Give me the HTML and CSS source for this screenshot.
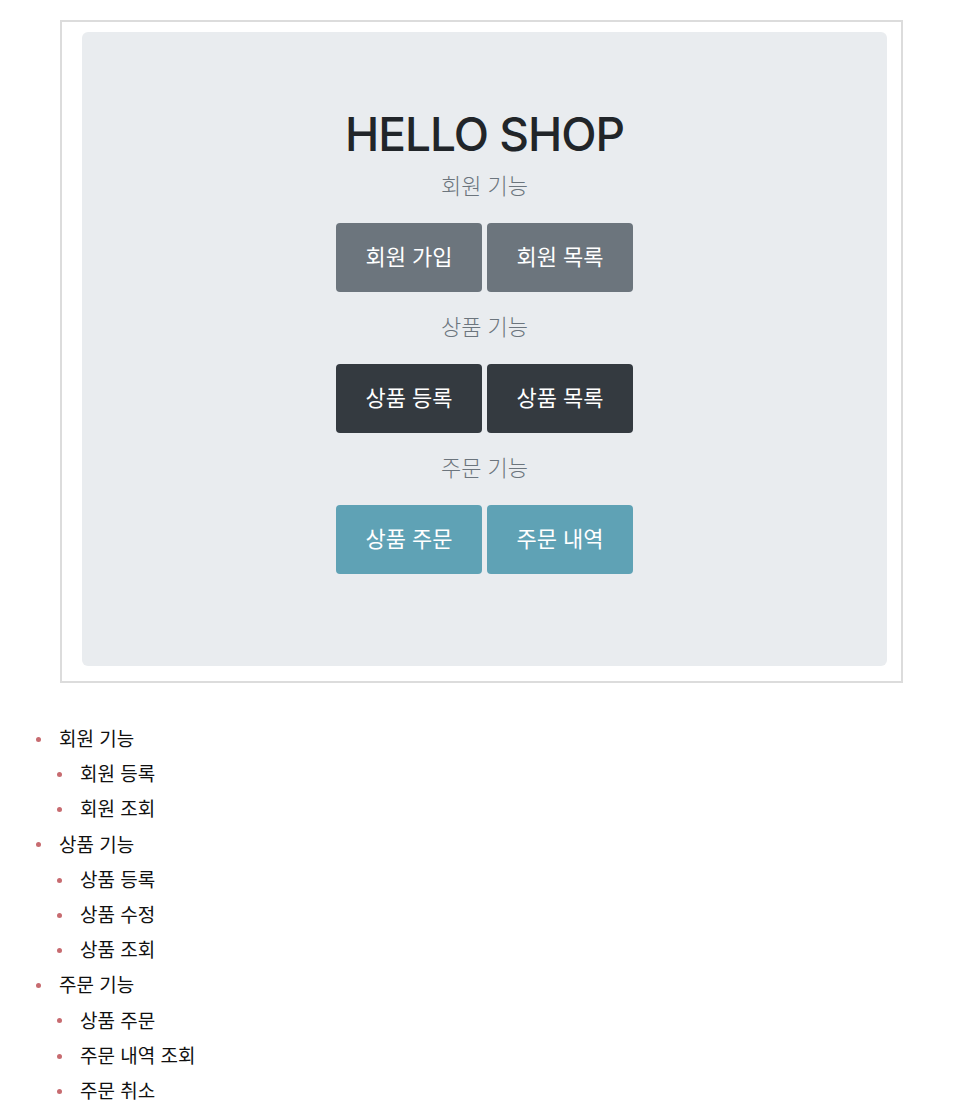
FILE: index.html
```html
<!DOCTYPE html>
<html lang="ko">

<head>
  <meta charset="UTF-8" />
  <meta name="viewport" content="width=device-width, initial-scale=1.0" />
  <title>HELLO SHOP</title>
  <link rel="stylesheet" href="styles.css">
</head>

<body>
  <div class="preview">
    <div class="jumbotron">
      <h1>HELLO SHOP</h1>

      <p class="lead">회원 기능</p>
      <div class="btn-row">
        <a class="btn btn-secondary" href="#">회원 가입</a>
        <a class="btn btn-secondary" href="#">회원 목록</a>
      </div>

      <p class="lead">상품 기능</p>
      <div class="btn-row">
        <a class="btn btn-dark" href="#">상품 등록</a>
        <a class="btn btn-dark" href="#">상품 목록</a>
      </div>

      <p class="lead">주문 기능</p>
      <div class="btn-row">
        <a class="btn btn-info" href="#">상품 주문</a>
        <a class="btn btn-info" href="#">주문 내역</a>
      </div>
    </div>
  </div>

  <ul class="feature-list">
    <li>회원 기능
      <ul>
        <li>회원 등록</li>
        <li>회원 조회</li>
      </ul>
    </li>
    <li>상품 기능
      <ul>
        <li>상품 등록</li>
        <li>상품 수정</li>
        <li>상품 조회</li>
      </ul>
    </li>
    <li>주문 기능
      <ul>
        <li>상품 주문</li>
        <li>주문 내역 조회</li>
        <li>주문 취소</li>
      </ul>
    </li>
  </ul>
</body>

</html>
```

FILE: styles.css
```css
body {
  margin: 0;
  background-color: #fff;
  font-family: Inter, "Noto Sans CJK KR", sans-serif;
}

/* 화면 캡처 박스 */
.preview {
  width: 843px;
  margin: 20px 0 0 60px;
  padding: 10px 14px 15px 20px;
  border: 2px solid #dcdcdc;
  box-sizing: border-box;
}

.jumbotron {
  background-color: #e9ecef;
  border-radius: 6px;
  padding: 73px 20px 92px;
  text-align: center;
}

.jumbotron h1 {
  margin: 0 0 8px;
  font-size: 46px;
  font-weight: 500;
  letter-spacing: -1px;
  line-height: 58px;
  color: #212529;
}

.lead {
  margin: 0 0 22px;
  font-size: 22px;
  font-weight: 300;
  line-height: 30px;
  color: #6c757d;
}

.btn-row + .lead {
  margin-top: 20px;
}

.btn-row {
  display: flex;
  justify-content: center;
  gap: 5px;
}

.btn {
  display: block;
  width: 146px;
  padding: 18px 0 19px;
  border: 1px solid transparent;
  border-radius: 4px;
  box-sizing: border-box;
  font-size: 22px;
  font-weight: 400;
  line-height: 30px;
  color: #fff;
  text-decoration: none;
}

.btn-secondary {
  background-color: #6c757d;
}

.btn-dark {
  background-color: #343a40;
}

.btn-info {
  background-color: #5fa2b5;
}

/* 기능 목록 */
.feature-list,
.feature-list ul {
  list-style: none;
  margin: 0;
  padding: 0 0 0 21px;
}

.feature-list {
  margin: 39px 0 0 38px;
}

.feature-list li {
  font-size: 19px;
  line-height: 35.2px;
  color: #111;
}

.feature-list li::before {
  content: "";
  display: inline-block;
  width: 5px;
  height: 5px;
  margin: 0 18px 3px -23px;
  border-radius: 50%;
  background-color: #c76b70;
  vertical-align: middle;
}
```
